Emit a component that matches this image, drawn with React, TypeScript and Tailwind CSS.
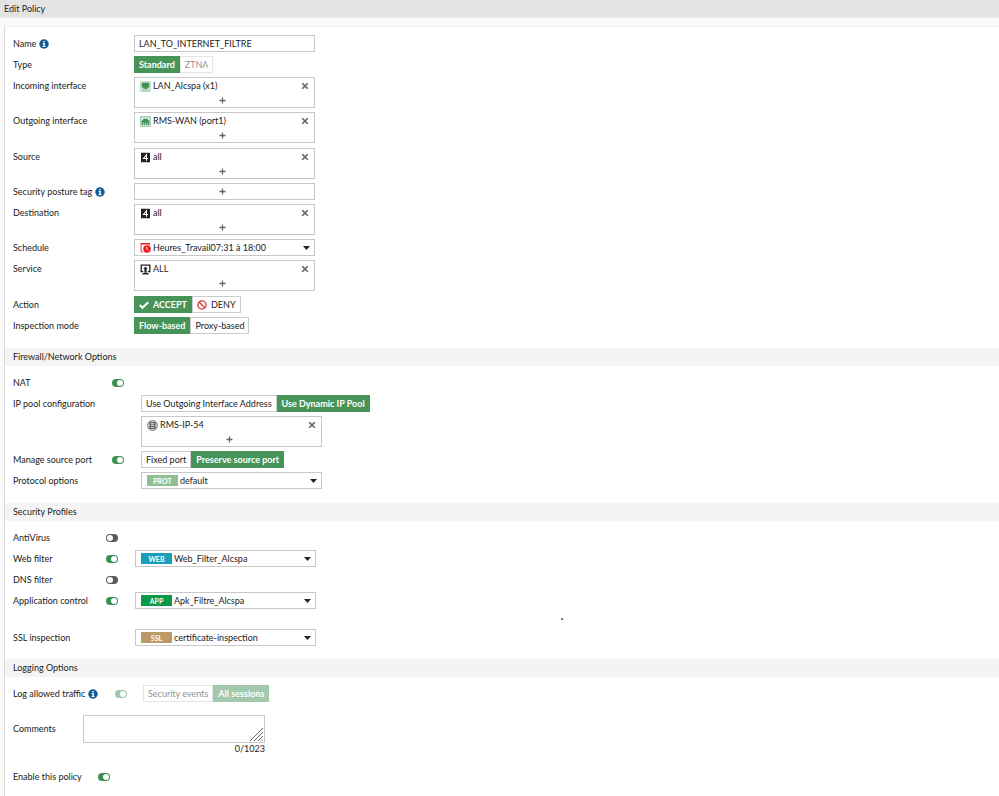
import { useState } from "react";
import type { ReactNode } from "react";
import clsx from "clsx";

function InfoIcon() {
  return (
    <svg className="size-[10px] shrink-0" viewBox="0 0 20 20" aria-hidden="true">
      <circle cx="10" cy="10" r="9.5" fill="#125b95" />
      <path d="M8.6 3.8h3v2.6h-3zM7.4 8h4.3v6h1.3v1.8H7.2V14h1.5V9.8H7.4z" fill="#fff" />
    </svg>
  );
}

function LanIcon() {
  return (
    <svg className="size-[11px] shrink-0" viewBox="0 0 22 22" aria-hidden="true">
      <rect x="1.5" y="1.5" width="19" height="19" fill="#dcefe0" stroke="#9cc8a7" strokeWidth="1.4" />
      <path d="M3.5 3.5h15v9.5h-3v2.5h-9V13h-3z" fill="#3f8f53" />
      <path d="M4 18h14" stroke="#79b388" strokeWidth="1.6" />
    </svg>
  );
}

function PortIcon() {
  return (
    <svg className="size-[11px] shrink-0" viewBox="0 0 22 22" aria-hidden="true">
      <rect x="1.5" y="1.5" width="19" height="19" fill="#dcefe0" stroke="#79b388" strokeWidth="1.6" />
      <path d="M3.5 18V8.5h3V5.5h9v3h3V18z" fill="#3f8f53" />
      <path d="M7.3 13v5M11 13v5M14.7 13v5" stroke="#dcefe0" strokeWidth="1.4" />
    </svg>
  );
}

function AddressIcon() {
  return (
    <svg className="size-[11px] shrink-0" viewBox="0 0 22 22" aria-hidden="true">
      <rect x="2" y="1.5" width="18" height="19" fill="#222" />
      <path d="M13 17.5V5.5L7 13h9" fill="none" stroke="#fff" strokeWidth="2.2" />
    </svg>
  );
}

function ScheduleIcon() {
  return (
    <svg className="size-[11px] shrink-0" viewBox="0 0 22 22" aria-hidden="true">
      <path d="M1 2h19v3H1z" fill="#f01818" />
      <path d="M2.2 5v14.5H6M19 5v2" fill="none" stroke="#f01818" strokeWidth="1.8" />
      <circle cx="14" cy="14" r="7.5" fill="#f01818" />
      <path d="M13.5 9.5v5l3.2 2" fill="none" stroke="#fff" strokeWidth="1.8" />
    </svg>
  );
}

function ServiceIcon() {
  return (
    <svg className="size-[11px] shrink-0" viewBox="0 0 22 22" aria-hidden="true">
      <path d="M6.5 15.2H2.4V2.4h17.2v12.8h-4.1" fill="none" stroke="#222" strokeWidth="2.6" />
      <path d="M11 5l4.4 5h-2.2v7.5H8.8V10H6.6z" fill="#222" />
      <path d="M5 19.5h12" stroke="#222" strokeWidth="3" />
    </svg>
  );
}

function PoolIcon() {
  return (
    <svg className="size-[11px] shrink-0" viewBox="0 0 22 22" aria-hidden="true">
      <circle cx="11" cy="11" r="9.6" fill="#fff" stroke="#333" strokeWidth="1.6" />
      <rect x="6" y="5.5" width="10" height="11" fill="#fff" stroke="#333" strokeWidth="2" />
      <path d="M6 9.5h10M6 13h10" stroke="#333" strokeWidth="1.6" />
    </svg>
  );
}

function CheckIcon() {
  return (
    <svg className="size-[10px] shrink-0" viewBox="0 0 20 20" aria-hidden="true">
      <path d="M1.5 10l5.5 5.5L18.5 4.5" fill="none" stroke="#fff" strokeWidth="4.2" />
    </svg>
  );
}

function DenyIcon() {
  return (
    <svg className="size-[10px] shrink-0" viewBox="0 0 20 20" aria-hidden="true">
      <circle cx="10" cy="10" r="8.2" fill="none" stroke="#d6322d" strokeWidth="2.6" />
      <path d="M4.4 4.4l11.2 11.2" stroke="#d6322d" strokeWidth="2.6" />
    </svg>
  );
}

function Row({ label, info, toggle, narrow, children }: { label: ReactNode; info?: boolean; toggle?: ReactNode; narrow?: string; children?: ReactNode }) {
  return (
    <div className="flex items-start">
      <div className={clsx("flex h-[17px] shrink-0 items-center", narrow ?? "w-[121px]")}>
        <span className="flex flex-1 items-center gap-[3px] whitespace-nowrap">
          {label}
          {info && <InfoIcon />}
        </span>
        {toggle}
      </div>
      {children}
    </div>
  );
}

function Toggle({ label, on, disabled, className }: { label: string; on?: boolean; disabled?: boolean; className?: string }) {
  return (
    <input
      type="checkbox"
      aria-label={label}
      defaultChecked={on}
      disabled={disabled}
      className={clsx(
        "flex h-2 w-3 shrink-0 appearance-none items-center rounded-full bg-[#5a5a5a] p-px before:size-1.5 before:rounded-full before:bg-white checked:justify-end checked:bg-[#3f8f53] disabled:opacity-50",
        className,
      )}
    />
  );
}

function Segmented({ label, options, initial, disabled, dimmed }: { label: string; options: { name: string; icon?: ReactNode }[]; initial: string; disabled?: boolean; dimmed?: string }) {
  const [value, setValue] = useState(initial);

  return (
    <div role="group" aria-label={label} className={clsx("flex", disabled && "opacity-50")}>
      {options.map((option) => (
        <button
          key={option.name}
          type="button"
          disabled={disabled || option.name === dimmed}
          aria-pressed={option.name === value}
          onClick={() => setValue(option.name)}
          className={clsx(
            "flex h-[17px] items-center gap-1 border px-1 whitespace-nowrap",
            option.name === value ? "border-[#479459] bg-[#479459] font-bold text-white" : "border-[#ccc] bg-white",
            option.name === dimmed && "opacity-50",
          )}
        >
          {option.icon}
          {option.name}
        </button>
      ))}
    </div>
  );
}

function EntryBox({ label, icon, name }: { label: string; icon?: ReactNode; name?: string }) {
  return (
    <div role="group" aria-label={label} className="w-[181px] border border-[#c8c8c8] bg-white">
      {name && (
        <div className="flex h-4 items-center gap-0.5 pr-1 pl-[5px]">
          {icon}
          <span className="flex-1">{name}</span>
          <button type="button" aria-label={`Remove ${name}`} className="flex size-[10px] items-center justify-center">
            <svg className="size-2" viewBox="0 0 16 16" aria-hidden="true">
              <path d="M2.5 2.5l11 11M13.5 2.5l-11 11" stroke="#666" strokeWidth="3.4" />
            </svg>
          </button>
        </div>
      )}
      <button type="button" aria-label={`Add ${label}`} className={clsx("flex w-full items-center justify-center pr-1", name ? "h-[13px]" : "h-[15px]")}>
        <svg className="size-[7px]" viewBox="0 0 14 14" aria-hidden="true">
          <path d="M7 1v12M1 7h12" stroke="#666" strokeWidth="2.6" />
        </svg>
      </button>
    </div>
  );
}

function SelectBox({ label, value, children }: { label: string; value: string; children: ReactNode }) {
  return (
    <div className="relative flex h-[17px] w-[181px] items-center border border-[#c8c8c8] bg-white pl-[5px]">
      {children}
      <select aria-label={label} defaultValue={value} className="h-full flex-1 appearance-none bg-transparent pr-4 pl-0.5">
        <option>{value}</option>
      </select>
      <svg className="pointer-events-none absolute right-1 h-1 w-[7px]" viewBox="0 0 14 8" aria-hidden="true">
        <path d="M0 0h14L7 8z" fill="#222" />
      </svg>
    </div>
  );
}

function Tag({ name, color }: { name: string; color: string }) {
  return <span className={clsx("flex h-[11px] w-[31px] shrink-0 items-center justify-center text-[7px] font-bold text-white", color)}>{name}</span>;
}

function SectionTitle({ children }: { children: ReactNode }) {
  return <h2 className="flex h-[18px] items-center bg-[#f4f4f4] pl-2">{children}</h2>;
}

export default function App() {
  return (
    <div className="flex min-h-screen flex-col bg-[#fafafa] font-['Lato',sans-serif] text-[9px] leading-3 text-[#222]">
      <h1 className="flex h-[18px] items-center border-b border-[#eee] bg-[#e4e4e4] pl-1">Edit Policy</h1>

      <form className="mt-2 ml-1 flex-1 border-t border-l border-t-[#f2f2f2] border-l-[#d8d8d8] bg-white pb-3" onSubmit={(event) => event.preventDefault()}>
        <div className="flex flex-col gap-1 pt-2 pl-2">
          <Row label={<label htmlFor="name">Name</label>} info>
            <input id="name" defaultValue="LAN_TO_INTERNET_FILTRE" className="h-[17px] w-[181px] border border-[#c8c8c8] bg-white px-1" />
          </Row>
          <Row label="Type">
            <Segmented label="Type" options={[{ name: "Standard" }, { name: "ZTNA" }]} initial="Standard" dimmed="ZTNA" />
          </Row>
          <Row label="Incoming interface">
            <EntryBox label="Incoming interface" icon={<LanIcon />} name="LAN_Alcspa (x1)" />
          </Row>
          <Row label="Outgoing interface">
            <EntryBox label="Outgoing interface" icon={<PortIcon />} name="RMS-WAN (port1)" />
          </Row>
        </div>
        <div className="flex flex-col gap-1 pt-[5px] pl-2">
          <Row label="Source">
            <EntryBox label="Source" icon={<AddressIcon />} name="all" />
          </Row>
          <Row label="Security posture tag" info>
            <EntryBox label="Security posture tag" />
          </Row>
          <Row label="Destination">
            <EntryBox label="Destination" icon={<AddressIcon />} name="all" />
          </Row>
          <Row label="Schedule">
            <SelectBox label="Schedule" value="Heures_Travail07:31 à 18:00">
              <ScheduleIcon />
            </SelectBox>
          </Row>
          <Row label="Service">
            <EntryBox label="Service" icon={<ServiceIcon />} name="ALL" />
          </Row>
        </div>
        <div className="flex flex-col gap-1 pt-[5px] pb-[14px] pl-2">
          <Row label="Action">
            <Segmented label="Action" options={[{ name: "ACCEPT", icon: <CheckIcon /> }, { name: "DENY", icon: <DenyIcon /> }]} initial="ACCEPT" />
          </Row>
          <Row label="Inspection mode">
            <Segmented label="Inspection mode" options={[{ name: "Flow-based" }, { name: "Proxy-based" }]} initial="Flow-based" />
          </Row>
        </div>

        <SectionTitle>Firewall/Network Options</SectionTitle>
        <div className="flex flex-col gap-1 pt-2 pb-[14px] pl-2">
          <Row label="NAT" narrow="w-32" toggle={<Toggle label="NAT" on className="mr-[17px]" />} />
          <Row label="IP pool configuration" narrow="w-32">
            <div className="flex flex-col gap-1">
              <Segmented label="IP pool configuration" options={[{ name: "Use Outgoing Interface Address" }, { name: "Use Dynamic IP Pool" }]} initial="Use Dynamic IP Pool" />
              <EntryBox label="IP pool" icon={<PoolIcon />} name="RMS-IP-54" />
            </div>
          </Row>
          <Row label="Manage source port" narrow="w-32" toggle={<Toggle label="Manage source port" on className="mr-[17px]" />}>
            <Segmented label="Manage source port" options={[{ name: "Fixed port" }, { name: "Preserve source port" }]} initial="Preserve source port" />
          </Row>
          <Row label="Protocol options" narrow="w-32">
            <SelectBox label="Protocol options" value="default">
              <Tag name="PROT" color="bg-[#8fbf95]" />
            </SelectBox>
          </Row>
        </div>

        <SectionTitle>Security Profiles</SectionTitle>
        <div className="flex flex-col gap-1 pt-2 pb-[13px] pl-2">
          <Row label="AntiVirus" narrow="w-[122px]" toggle={<Toggle label="AntiVirus" className="mr-[17px]" />} />
          <Row label="Web filter" narrow="w-[122px]" toggle={<Toggle label="Web filter" on className="mr-[17px]" />}>
            <SelectBox label="Web filter profile" value="Web_Filter_Alcspa">
              <Tag name="WEB" color="bg-[#1a9fb8]" />
            </SelectBox>
          </Row>
          <Row label="DNS filter" narrow="w-[122px]" toggle={<Toggle label="DNS filter" className="mr-[17px]" />} />
          <Row label="Application control" narrow="w-[122px]" toggle={<Toggle label="Application control" on className="mr-[17px]" />}>
            <SelectBox label="Application control profile" value="Apk_Filtre_Alcspa">
              <Tag name="APP" color="bg-[#089949]" />
            </SelectBox>
          </Row>
          <div className="flex h-3 items-center pl-[548px]">
            <span className="h-0.5 w-0.5 bg-[#777]" />
          </div>
          <Row label="SSL inspection" narrow="w-[122px]">
            <SelectBox label="SSL inspection profile" value="certificate-inspection">
              <Tag name="SSL" color="bg-[#bb9a68]" />
            </SelectBox>
          </Row>
        </div>

        <SectionTitle>Logging Options</SectionTitle>
        <div className="flex flex-col gap-[13px] pt-2 pl-2">
          <Row label="Log allowed traffic" info narrow="w-[130px]" toggle={<Toggle label="Log allowed traffic" on disabled className="mr-4" />}>
            <Segmented label="Log allowed traffic" options={[{ name: "Security events" }, { name: "All sessions" }]} initial="All sessions" disabled />
          </Row>
          <div className="flex items-start">
            <label htmlFor="comments" className="flex h-7 w-[70px] items-center">
              Comments
            </label>
            <div className="w-[182px]">
              <div className="relative">
                <textarea id="comments" className="block h-7 w-full resize-none border border-[#c8c8c8] bg-white px-1" />
                <svg className="pointer-events-none absolute right-0.5 bottom-0.5 size-[13px]" viewBox="0 0 13 13" aria-hidden="true">
                  <path d="M0 13L13 0M4 13l9-9M8 13l5-5M11.5 13l1.5-1.5" stroke="#666" strokeWidth="1" />
                </svg>
              </div>
              <p className="text-right">0/1023</p>
            </div>
          </div>
          <Row label="Enable this policy" narrow="w-[97px]" toggle={<Toggle label="Enable this policy" on />} />
        </div>
      </form>
    </div>
  );
}
